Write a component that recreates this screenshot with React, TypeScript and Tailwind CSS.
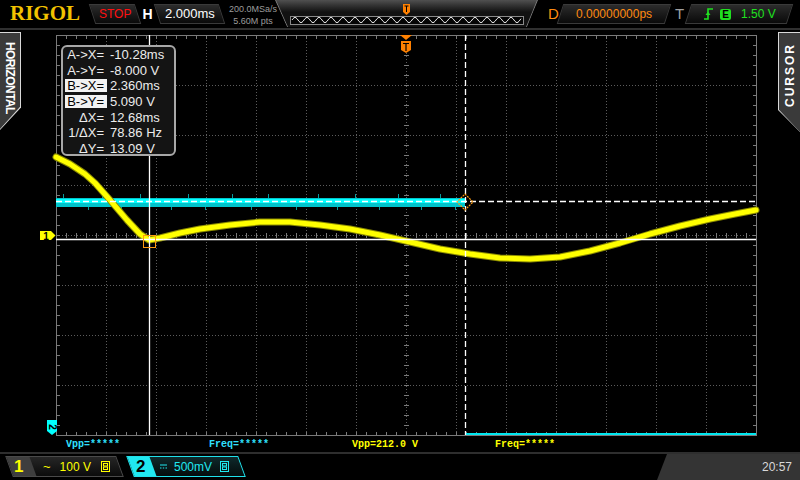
import React from 'react';

const yellowPts: [number, number][] = [
  [56, 157], [70, 164], [85, 174], [95, 183], [110, 200], [127, 220], [140, 234], [149, 240],
  [160, 238], [180, 233], [200, 229], [230, 225], [260, 222], [290, 222], [320, 225],
  [350, 229], [380, 235], [410, 242], [440, 249], [470, 254], [500, 258], [530, 259],
  [560, 257], [590, 251], [620, 243], [650, 234], [680, 226], [710, 219], [735, 214], [756, 210],
];

const cyanSpikes = [
  [63, -1], [88, 1], [102, -1], [121, 1], [140, -1], [171, 1], [188, -1], [205, 1], [232, -1],
  [251, 1], [268, -1], [296, 1], [318, -1], [337, 1], [355, -1], [379, 1], [398, -1], [421, 1],
  [440, -1], [455, 1],
];

const cursorRows: [string, string, boolean][] = [
  ['A->X=', '-10.28ms', false],
  ['A->Y=', '-8.000 V', false],
  ['B->X=', '2.360ms', true],
  ['B->Y=', '5.090 V', true],
  ['ΔX=', '12.68ms', false],
  ['1/ΔX=', '78.86 Hz', false],
  ['ΔY=', '13.09 V', false],
];

const gridV = [106, 156, 206, 256, 306, 356, 456, 506, 556, 606, 656, 706];
const gridH = [85, 135, 185, 285, 335, 385];
const ticksX = Array.from({ length: 69 }, (_, i) => 66 + i * 10);
const ticksY = Array.from({ length: 39 }, (_, i) => 45 + i * 10);

function sineOverview() {
  let d = 'M17 20';
  for (let x = 17; x <= 246; x += 1) {
    d += ` L${x} ${(20 - 2.6 * Math.sin(((x - 17) / 12) * Math.PI * 2)).toFixed(2)}`;
  }
  return d;
}

function TopBar() {
  return (
    <div className="h-[30px] flex items-start pt-[4px] border-b-2 border-[#303030]">
      <span className="ml-[10px] w-[70px] -mt-[1px] font-['Liberation_Serif',serif] font-bold text-[21px] leading-[20px] text-[#f2c200]">
        RIGOL
      </span>
      <div className="ml-[12px] w-[46px] h-[20px] skew-x-[18deg] border border-[#3a3a3a] bg-linear-to-b from-[#2c2c2c] to-[#0a0a0a] flex items-center justify-center">
        <span className="-skew-x-[18deg] text-[12px] text-[#ff1010]">STOP</span>
      </div>
      <div className="w-[19px] h-[20px] flex items-center justify-center text-white font-bold text-[14px]">H</div>
      <div className="w-[65px] h-[20px] skew-x-[18deg] border border-[#3a3a3a] bg-linear-to-b from-[#2c2c2c] to-[#0a0a0a] flex items-center justify-center">
        <span className="-skew-x-[18deg] text-[13px] text-white">2.000ms</span>
      </div>
      <div className="ml-[6px] w-[50px] text-center text-[9px] leading-[11.5px] text-[#9c9c9c] whitespace-nowrap">
        <div>200.0MSa/s</div>
        <div>5.60M pts</div>
      </div>
      <div className="-ml-[3px] -mt-[4px] relative w-[263px] h-[27px] bg-linear-to-b from-[#505050] from-0% to-[#121212] to-45% [clip-path:polygon(0_0,100%_0,calc(100%-11px)_100%,12px_100%)]">
        <svg width="263" height="27" className="block">
          <line x1="0.5" y1="0" x2="12.5" y2="27" stroke="#7a7a7a" />
          <line x1="262.5" y1="0" x2="251.5" y2="27" stroke="#7a7a7a" />
          <rect x="15.5" y="16.5" width="233" height="8" fill="#050505" stroke="#8a8a8a" />
          <path d={sineOverview()} fill="none" stroke="#f0f0f0" strokeWidth="1" />
          <path d="M128 4 H135 V12 L131.5 15 L128 12 Z" fill="#ff8000" />
          <path d="M129.5 6 H133.5 M131.5 6 V12" stroke="#000" strokeWidth="1" />
        </svg>
      </div>
      <span className="ml-[10px] w-[10px] text-[15px] leading-[20px] text-[#ff8a10]">D</span>
      <div className="ml-[2px] w-[108px] h-[20px] -skew-x-[18deg] border border-[#3a3a3a] bg-linear-to-b from-[#2c2c2c] to-[#0a0a0a] flex items-center justify-center">
        <span className="skew-x-[18deg] text-[12px] text-[#ff8a10]">0.00000000ps</span>
      </div>
      <span className="ml-[7px] w-[10px] text-[15px] leading-[20px] text-[#a0a0a0]">T</span>
      <div className="ml-[3px] w-[102px] h-[20px] -skew-x-[18deg] border border-[#3a3a3a] bg-linear-to-b from-[#2c2c2c] to-[#0a0a0a] flex items-center">
        <div className="skew-x-[18deg] flex items-center ml-[15px] text-[12px] text-[#20e020]">
          <svg width="10" height="12" viewBox="0 0 10 12" className="block">
            <path d="M0 11 H4 V1 H9" fill="none" stroke="#20e020" strokeWidth="1.6" />
            <path d="M1.5 7 L4 3.5 L6.5 7 Z" fill="#20e020" />
          </svg>
          <span className="ml-[6px] w-[11px] h-[11px] rounded-[2px] bg-[#20e020] text-black font-bold text-[10px] leading-[11px] text-center">E</span>
          <span className="ml-[10px]">1.50 V</span>
        </div>
      </div>
    </div>
  );
}

function Scope() {
  const yPath = 'M' + yellowPts.map(([x, y]) => `${x} ${y}`).join(' L');
  return (
    <svg width="756" height="406" viewBox="22 30 756 406" className="block">
      <g stroke="#5c5c5c" strokeDasharray="1 2" shapeRendering="crispEdges">
        {gridV.map((x) => (
          <line key={'v' + x} x1={x + 0.5} y1="35" x2={x + 0.5} y2="435" />
        ))}
        {gridH.map((y) => (
          <line key={'h' + y} x1="56" y1={y + 0.5} x2="756" y2={y + 0.5} />
        ))}
        <line x1="406.5" y1="35" x2="406.5" y2="435" />
        <line x1="56" y1="235.5" x2="756" y2="235.5" />
      </g>
      <g stroke="#7a7a7a" shapeRendering="crispEdges">
        <rect x="56.5" y="35.5" width="700" height="400" fill="none" />
        {ticksX.map((x) => (
          <g key={'tx' + x}>
            <line x1={x + 0.5} y1="35" x2={x + 0.5} y2="39" />
            <line x1={x + 0.5} y1="432" x2={x + 0.5} y2="436" />
            <line x1={x + 0.5} y1="233" x2={x + 0.5} y2="238" />
          </g>
        ))}
        {ticksY.map((y) => (
          <g key={'ty' + y}>
            <line x1="56" y1={y + 0.5} x2="60" y2={y + 0.5} />
            <line x1="753" y1={y + 0.5} x2="757" y2={y + 0.5} />
            <line x1="404" y1={y + 0.5} x2="409" y2={y + 0.5} />
          </g>
        ))}
      </g>

      {/* channel 2 trace */}
      <rect x="56" y="198" width="409" height="9" fill="#00c4cc" />
      <rect x="56" y="199" width="409" height="4" fill="#00ffff" />
      <g stroke="#0a9a9a" strokeWidth="1">
        {cyanSpikes.map(([x, s]) =>
          s < 0 ? (
            <line key={'c' + x} x1={x + 0.5} y1="194" x2={x + 0.5} y2="198" />
          ) : (
            <line key={'c' + x} x1={x + 0.5} y1="207" x2={x + 0.5} y2="210" />
          ),
        )}
      </g>
      <line x1="465" y1="434" x2="756" y2="434" stroke="#00e8f0" strokeWidth="2" />

      {/* channel 1 trace */}
      <path d={yPath} fill="none" stroke="#8c8c00" strokeWidth="7" strokeLinejoin="round" strokeLinecap="round" />
      <path d={yPath} fill="none" stroke="#ffff00" strokeWidth="5" strokeLinejoin="round" strokeLinecap="round" />

      {/* cursors */}
      <line x1="149.5" y1="35" x2="149.5" y2="435" stroke="#fff" strokeWidth="1.3" />
      <line x1="56" y1="239.5" x2="756" y2="239.5" stroke="#fff" strokeWidth="1.3" />
      <line x1="465.5" y1="35" x2="465.5" y2="435" stroke="#fff" strokeWidth="1.3" strokeDasharray="6 3" />
      <line x1="56" y1="201.5" x2="756" y2="201.5" stroke="#fff" strokeWidth="1.3" strokeDasharray="6 3" />
      <rect x="143.5" y="235.5" width="12" height="12" fill="none" stroke="#ff9a10" />
      <path d="M465 194 L473 202 L465 210 L457 202 Z" fill="none" stroke="#ff9a10" strokeWidth="1.2" strokeDasharray="2 1" />

      {/* markers */}
      <path d="M40 231 H51 L55.5 235.5 L51 240 H40 Z" fill="#ffff00" />
      <text x="46" y="239.5" fontSize="10" fontWeight="bold" textAnchor="middle" fill="#000" fontFamily="Liberation Sans, sans-serif">
        1
      </text>
      <path d="M47 420 H57 V431 L52 435 L47 431 Z" fill="#00ffff" />
      <text transform="translate(52 427) rotate(90)" fontSize="10" fontWeight="bold" textAnchor="middle" dominantBaseline="central" fill="#000" fontFamily="Liberation Sans, sans-serif">
        2
      </text>
      <path d="M400 35 H412 L406 40 Z" fill="#ff8000" />
      <path d="M401 41 H411 V50 L406 53 L401 50 Z" fill="#ff8000" />
      <path d="M403 43.5 H409 M406 43.5 V51" stroke="#000" strokeWidth="1.2" />
    </svg>
  );
}

function CursorPanel() {
  return (
    <div className="absolute left-[61px] top-[15px] w-[115px] h-[111px] rounded-[6px] border-2 border-[#a8a8a8] bg-[#141414] pl-[2px] text-[13px] text-[#ececec]">
      {cursorRows.map(([label, value, hi]) => (
        <div key={label} className="flex h-[15.6px] items-center whitespace-nowrap">
          <span className={hi ? 'w-[42px] pr-[3px] text-right leading-[13px] bg-[#f2f2f2] text-black' : 'w-[42px] pr-[3px] text-right leading-[13px]'}>
            {label}
          </span>
          <span className="ml-[3px] leading-[13px]">{value}</span>
        </div>
      ))}
    </div>
  );
}

function MeasureRow() {
  return (
    <div className="h-[16px] flex pt-[4px] font-['Liberation_Mono',monospace] font-bold text-[10px] leading-[10px] whitespace-nowrap">
      <span className="ml-[66px] w-[143px] text-[#30e0ff]">Vpp=*****</span>
      <span className="w-[143px] text-[#30e0ff]">Freq=*****</span>
      <span className="w-[143px] text-[#ffff00]">Vpp=212.0 V</span>
      <span className="w-[143px] text-[#ffff00]">Freq=*****</span>
    </div>
  );
}

function ProbeIcon({ color }: { color: string }) {
  return (
    <svg width="9" height="11" viewBox="0 0 9 11" className="block">
      <rect x="0.5" y="0.5" width="8" height="10" fill="none" stroke={color} />
      <rect x="2.5" y="2.5" width="4" height="2.5" fill="none" stroke={color} />
      <rect x="2.5" y="6" width="4" height="2.5" fill="none" stroke={color} />
    </svg>
  );
}

function BottomBar() {
  return (
    <div className="h-[26px] flex items-start pt-[2px]">
      <div className="ml-[9px] w-[111px] h-[21px] skew-x-[20deg] border border-[#4a4a4a] bg-linear-to-b from-[#262626] to-[#0c0c0c] flex">
        <div className="w-[23px] bg-[#3e3e3e] flex items-center pl-[4px]">
          <span className="-skew-x-[20deg] text-[#ffff00] font-bold text-[17px] leading-none">1</span>
        </div>
        <div className="-skew-x-[20deg] flex items-center text-[12px] text-[#ffff00]">
          <span className="ml-[10px] text-[13px]">~</span>
          <span className="ml-[9px]">100 V</span>
          <span className="ml-[10px]">
            <ProbeIcon color="#ffff00" />
          </span>
        </div>
      </div>
      <div className="ml-[10px] w-[112px] h-[21px] skew-x-[20deg] border border-[#20e0ea] bg-linear-to-b from-[#0f2a2c] to-[#050c0c] flex">
        <div className="w-[22px] bg-[#20e8f0] flex items-center pl-[5px]">
          <span className="-skew-x-[20deg] text-black font-bold text-[17px] leading-none">2</span>
        </div>
        <div className="-skew-x-[20deg] flex items-center text-[12px] text-[#20e8f0]">
          <svg width="7" height="5" viewBox="0 0 7 5" className="block ml-[7px]">
            <line x1="0" y1="1" x2="7" y2="1" stroke="#20e8f0" />
            <path d="M0 4 H1.5 M2.8 4 H4.2 M5.5 4 H7" stroke="#20e8f0" />
          </svg>
          <span className="ml-[7px]">500mV</span>
          <span className="ml-[8px]">
            <ProbeIcon color="#20e8f0" />
          </span>
        </div>
      </div>
      <div className="flex-1" />
      <div className="-mt-[2px] w-[143px] h-[26px] bg-[#343434] [clip-path:polygon(10px_0,100%_0,100%_100%,0_100%)] flex items-center justify-end pr-[8px] text-[12px] text-[#d8d8d8]">
        20:57
      </div>
    </div>
  );
}

export default function App() {
  return (
    <div className="w-[800px] h-[480px] bg-black overflow-hidden flex flex-col font-['Liberation_Sans',Arial,sans-serif] select-none">
      <TopBar />
      <div className="relative flex h-[406px]">
        <div className="w-[22px] pt-[2px]">
          <div className="h-[98px] w-[21px] bg-[#d8d8d8] pt-px pr-px [clip-path:polygon(0_0,100%_0,100%_77%,0_100%)]">
            <div className="h-full w-full bg-[#3a3a3a] flex items-start justify-center pt-[9px] [clip-path:polygon(0_0,100%_0,100%_76%,0_99%)]">
              <span className="[writing-mode:vertical-rl] text-white font-bold text-[12px] tracking-[-0.6px] leading-none">
                HORIZONTAL
              </span>
            </div>
          </div>
        </div>
        <Scope />
        <div className="w-[22px] pt-[2px]">
          <div className="h-[100px] w-[22px] bg-[#d8d8d8] pt-px pl-px [clip-path:polygon(0_0,100%_0,100%_100%,0_78%)]">
            <div className="h-full w-full bg-[#3a3a3a] flex items-start justify-center pt-[10px] [clip-path:polygon(0_0,100%_0,100%_100%,0_77.5%)]">
              <span className="[writing-mode:vertical-rl] rotate-180 text-white font-bold text-[12px] tracking-[2px] leading-none">
                CURSOR
              </span>
            </div>
          </div>
        </div>
        <CursorPanel />
      </div>
      <MeasureRow />
      <div className="h-[2px] bg-[#2e2e2e]" />
      <BottomBar />
    </div>
  );
}
